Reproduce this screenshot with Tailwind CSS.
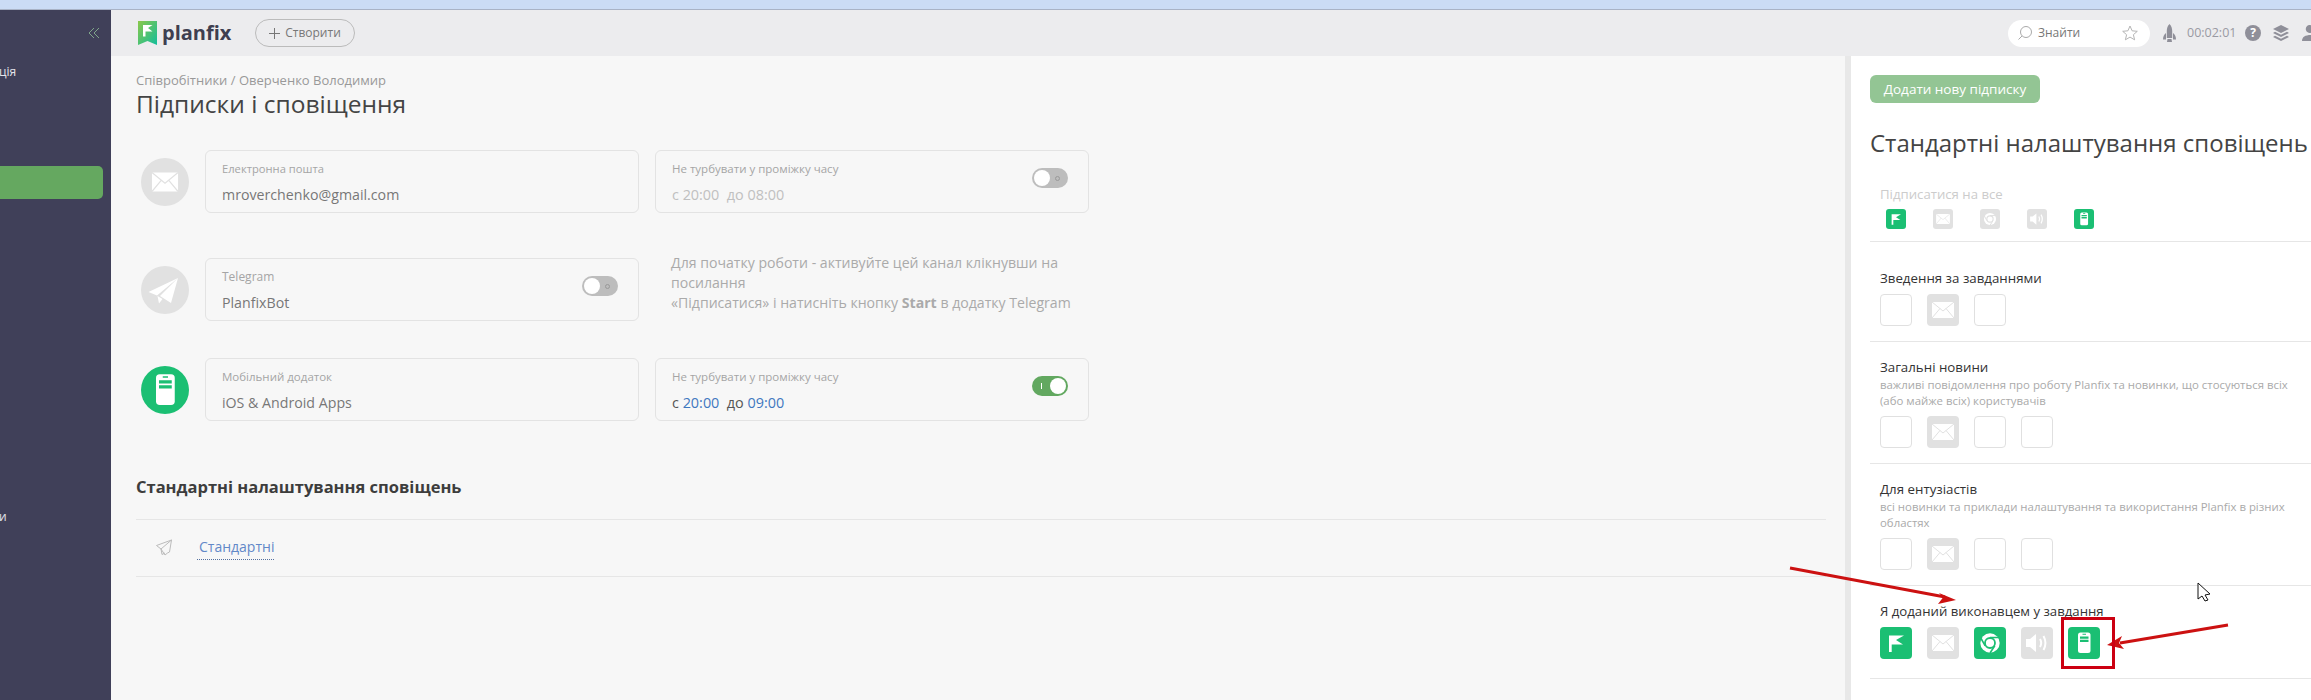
<!DOCTYPE html>
<html lang="uk">
<head>
  <meta charset="UTF-8" />
  <title>Підписки і сповіщення</title>
  <script src="https://cdn.jsdelivr.net/npm/@tailwindcss/browser@4"></script>
</head>
<body class="relative w-[2311px] h-[700px] overflow-hidden bg-[#f7f7f7] [font-family:'Open_Sans',sans-serif]">
  <svg class="hidden">
    <symbol id="mail" viewBox="0 0 32 32">
      <path d="M5 8h22v16H5z" fill="#fff" />
      <path d="M5 8l11 9 11-9M5 24l8-9.5M27 24l-8-9.5" fill="none" stroke="#e1e1e1" stroke-width="1" />
    </symbol>
    <symbol id="flag" viewBox="0 0 32 32">
      <path d="M9 8.5h15l-8 4.5 7 4.500H11.700V25H9z" fill="#fff" />
    </symbol>
    <symbol id="chrome" viewBox="0 0 32 32">
      <circle cx="16" cy="16" r="9.7" fill="#fff" />
      <circle cx="16" cy="16" r="5" fill="none" stroke="currentColor" stroke-width="1.8" />
      <path d="M16 10.5h9M11.2 18.8L6.800 11M20.800 18.800L16 26" stroke="currentColor" stroke-width="1.6" />
    </symbol>
    <symbol id="sound" viewBox="0 0 32 32">
      <path d="M5 12h4l6-5v18l-6-5H5z" fill="#fff" />
      <path d="M19 12c1.500 2.500 1.500 5.500 0 8M22.500 9c2.500 4.500 2.500 9.500 0 14" fill="none" stroke="#fff" stroke-width="2" />
    </symbol>
    <symbol id="phone" viewBox="0 0 32 32">
      <rect x="10" y="5.5" width="12.5" height="20.5" rx="2.5" fill="#fff" />
      <path d="M14.500 6.800h3.500v1h-3.500zM12 9.500h8.500v2.200H12zM12 12.800h8.500v2.200H12z" fill="currentColor" />
    </symbol>
  </svg>

  <div class="h-[10px] bg-[#cbdcf5] border-b border-[#a9b3c6]"></div>

  <div class="flex h-[690px]">
    <aside class="w-[111px] shrink-0 bg-[#404059] flex flex-col">
      <div class="flex justify-end pr-[11px] pt-[18px]">
        <svg class="w-[12px] h-[10px]" viewBox="0 0 12 10" fill="none" stroke="#7fa58a" stroke-width="1">
          <path d="M6 0L1 5l5 5M11 0L6 5l5 5" />
        </svg>
      </div>
      <div class="mt-[24px] h-[20px] leading-[20px] text-[12px] text-[#e4e4ea] -ml-[1px]">ція</div>
      <div class="mt-[84px] w-[103px] h-[33px] bg-[#65a860] rounded-r-[5px]"></div>
      <div class="mt-[308px] h-[20px] leading-[20px] text-[12px] text-[#e4e4ea] -ml-[1px]">и</div>
    </aside>

    <div class="flex-1 min-w-0 flex flex-col">
      <header class="h-[46px] shrink-0 bg-[#ececee] flex items-center pl-[27px]">
        <svg class="w-[19px] h-[24px]" viewBox="0 0 19 24">
          <defs>
            <linearGradient id="logo-grad" x1="0" y1="0" x2="1" y2="1">
              <stop offset="0" stop-color="#8bc84a" />
              <stop offset="1" stop-color="#12bd9b" />
            </linearGradient>
          </defs>
          <path d="M0 0h19v24l-9.5-4L0 24z" fill="url(#logo-grad)" />
          <path d="M5 4h9.5l-4.500 3 4.500 3.500H7.500V15.500H5z" fill="#fff" />
        </svg>
        <span class="ml-[5px] w-[70px] text-[20px] leading-[24px] font-bold text-[#3f3f50]">planfix</span>
        <button class="ml-[23px] w-[100px] h-[28px] rounded-full border border-[#bbbbbb] flex items-center justify-center gap-[5px] text-[12px] text-[#777777]">
          <svg class="w-[11px] h-[11px]" viewBox="0 0 11 11" stroke="#777777" stroke-width="1"><path d="M5.500 0v11M0 5.500h11" /></svg>
          Створити
        </button>
        <div class="ml-auto flex items-center">
          <div class="w-[142px] h-[27px] bg-white rounded-full flex items-center pl-[10px] pr-[12px]">
            <svg class="w-[14px] h-[14px]" viewBox="0 0 14 14" fill="none" stroke="#aaaaaa" stroke-width="1"><circle cx="8" cy="6" r="5.500" /><path d="M4 10l-3.500 3.500" /></svg>
            <span class="ml-[6px] text-[12px] text-[#777777]">Знайти</span>
            <svg class="ml-auto w-[16px] h-[16px]" viewBox="0 0 16 16" fill="none" stroke="#b5b5b5" stroke-width="1"><path d="M8 1l2.100 4.800 5.200.5-3.900 3.400 1.200 5.100L8 12.100l-4.600 2.700 1.200-5.100L.7 6.300l5.200-.5z" /></svg>
          </div>
          <svg class="ml-[13px] w-[13px] h-[18px]" viewBox="0 0 13 18" fill="#8f8f99"><path d="M6.500 0C8.500 2 9.200 4.500 9.200 7v7H3.800V7c0-2.500.7-5 2.700-7zM3 9v6.500H0c0-3 1-5 3-6.500zM10 9c2 1.500 3 3.500 3 6.500h-3zM4.500 15h4l.5 3H4z" /></svg>
          <span class="ml-[11px] w-[48px] text-[12.5px] text-[#9a9aa3]">00:02:01</span>
          <span class="ml-[10px] w-[16px] h-[16px] rounded-full bg-[#8f8f99] text-white text-[12px] leading-[16px] font-bold text-center">?</span>
          <svg class="ml-[12px] w-[16px] h-[16px]" viewBox="0 0 16 16" fill="#8f8f99"><path d="M8 0l8 4-8 4-8-4z" /><path d="M2 6.800l6 3 6-3 2 1.200-8 4-8-4z" /><path d="M2 10.800l6 3 6-3 2 1.200-8 4-8-4z" /></svg>
          <svg class="ml-[13px] w-[9px] h-[16px]" viewBox="0 0 9 16" fill="#8f8f99"><path d="M8 0a4 4 0 0 1 1 .2v7.600A4 4 0 1 1 8 0zM0 16c0-4 3-6 9-6v6z" /></svg>
        </div>
      </header>

      <div class="flex-1 min-h-0 flex">
        <main class="w-[1734px] shrink-0 pl-[25px] pr-[19px]">
          <div class="pt-[15px] text-[13px] leading-[18px] text-[#999999]">Співробітники / Оверченко Володимир</div>
          <h1 class="h-[30px] text-[24.5px] leading-[30px] text-[#444444]">Підписки і сповіщення</h1>

          <div class="mt-[31px] flex items-center pl-[5px]">
            <div class="w-[48px] h-[48px] rounded-full bg-[#e1e1e1] flex items-center justify-center">
              <svg class="w-[38px] h-[38px]"><use href="#mail" /></svg>
            </div>
            <div class="ml-[16px] w-[434px] h-[63px] bg-[#f7f7f7] border border-[#e3e3e3] rounded-md pl-[16px] pt-[9px]">
              <div class="text-[11.2px] leading-[18px] text-[#a5a5a5]">Електронна пошта</div>
              <div class="mt-[7px] text-[14.2px] leading-[20px] text-[#777777]">mroverchenko@gmail.com</div>
            </div>
            <div class="ml-[16px] w-[434px] h-[63px] border border-[#e3e3e3] rounded-md pl-[16px] pr-[20px] pt-[9px] flex justify-between">
              <div>
                <div class="text-[11.5px] leading-[18px] text-[#a5a5a5]">Не турбувати у проміжку часу</div>
                <div class="mt-[7px] text-[14.4px] leading-[20px] text-[#c0c0c0] whitespace-pre">с 20:00  до 08:00</div>
              </div>
              <div class="mt-[8px] w-[36px] h-[20px] rounded-full bg-[#bdbdbd] flex items-center pl-[2px] pr-[8px] justify-between">
                <span class="w-[16px] h-[16px] rounded-full bg-white"></span>
                <span class="w-[5px] h-[5px] rounded-full border border-[#999999]"></span>
              </div>
            </div>
          </div>

          <div class="mt-[45px] flex items-center pl-[5px]">
            <div class="w-[48px] h-[48px] rounded-full bg-[#e1e1e1]">
              <svg class="w-[48px] h-[48px]" viewBox="0 0 48 48" fill="#fff">
                <path d="M37 12L7.500 26l8.500 3.500zM37 12L19 30l11 7zM16.500 30l1.500 7.500 3.500-4.500z" />
              </svg>
            </div>
            <div class="ml-[16px] w-[434px] h-[63px] border border-[#e3e3e3] rounded-md pl-[16px] pr-[20px] pt-[9px] flex justify-between">
              <div>
                <div class="text-[12px] leading-[18px] text-[#a5a5a5]">Telegram</div>
                <div class="mt-[7px] text-[14.2px] leading-[20px] text-[#777777]">PlanfixBot</div>
              </div>
              <div class="mt-[8px] w-[36px] h-[20px] rounded-full bg-[#bdbdbd] flex items-center pl-[2px] pr-[8px] justify-between">
                <span class="w-[16px] h-[16px] rounded-full bg-white"></span>
                <span class="w-[5px] h-[5px] rounded-full border border-[#999999]"></span>
              </div>
            </div>
            <p class="ml-[32px] self-start -mt-[5px] w-[404px] text-[14.1px] leading-[20px] text-[#aaaaaa]">Для початку роботи - активуйте цей канал клікнувши на посилання<br />«Підписатися» і натисніть кнопку <b>Start</b> в додатку Telegram</p>
          </div>

          <div class="mt-[37px] flex items-center pl-[5px]">
            <div class="w-[48px] h-[48px] rounded-full bg-[#1bbf73] text-[#1bbf73]">
              <svg class="w-[48px] h-[48px]"><use href="#phone" /></svg>
            </div>
            <div class="ml-[16px] w-[434px] h-[63px] border border-[#e3e3e3] rounded-md pl-[16px] pt-[9px]">
              <div class="text-[11.5px] leading-[18px] text-[#a5a5a5]">Мобільний додаток</div>
              <div class="mt-[7px] text-[14.2px] leading-[20px] text-[#777777]">iOS &amp; Android Apps</div>
            </div>
            <div class="ml-[16px] w-[434px] h-[63px] border border-[#e3e3e3] rounded-md pl-[16px] pr-[20px] pt-[9px] flex justify-between">
              <div>
                <div class="text-[11.5px] leading-[18px] text-[#a5a5a5]">Не турбувати у проміжку часу</div>
                <div class="mt-[7px] text-[14.4px] leading-[20px] text-[#555555] whitespace-pre">с <span class="text-[#3f78c0]">20:00</span>  до <span class="text-[#3f78c0]">09:00</span></div>
              </div>
              <div class="mt-[8px] w-[36px] h-[20px] rounded-full bg-[#62a860] flex items-center pl-[9px] pr-[2px] justify-between">
                <span class="w-[1px] h-[6px] bg-white"></span>
                <span class="w-[16px] h-[16px] rounded-full bg-white"></span>
              </div>
            </div>
          </div>

          <h2 class="mt-[54px] text-[16.5px] leading-[24px] font-bold text-[#3d3d3d]">Стандартні налаштування сповіщень</h2>
          <div class="mt-[20px] h-[58px] border-y border-[#e6e6e6] flex items-center pl-[20px]">
            <svg class="w-[16px] h-[17px] -mt-[2px]" viewBox="0 0 16 17" fill="none" stroke="#bbbbbb" stroke-width="1"><path d="M15.500 1L.5 6.500l4.500 3.500 4 6 2.500-2 2-1zM15.500 1L5 10l1 5.500 3-1.500" /></svg>
            <a class="ml-[25px] pl-[2px] h-[23px] text-[14px] leading-[20px] text-[#6288c8] border-b border-dotted border-[#54709f]">Стандартні</a>
          </div>
        </main>

        <div class="w-[6px] shrink-0 bg-[#e8e8e8]"></div>

        <section class="flex-1 min-w-0 bg-white pl-[19px]">
          <button class="mt-[19px] w-[170px] h-[28px] rounded-md bg-[#93c594] text-white text-[13.5px] leading-[28px] text-center">Додати нову підписку</button>
          <h2 class="mt-[24px] text-[24px] leading-[32px] text-[#444444] whitespace-nowrap">Стандартні налаштування сповіщень</h2>

          <div class="pl-[10px] mt-[25px] h-[20px] text-[13.2px] leading-[20px] text-[#cccccc]">Підписатися на все</div>
          <div class="mt-[5px] pl-[16px] flex gap-[27px] text-[#1bbf73]">
            <span class="w-[20px] h-[20px] rounded-[3px] bg-[#1bbf73]"><svg class="w-[20px] h-[20px]"><use href="#flag" /></svg></span>
            <span class="w-[20px] h-[20px] rounded-[3px] bg-[#e1e1e1]"><svg class="w-[20px] h-[20px]"><use href="#mail" /></svg></span>
            <span class="w-[20px] h-[20px] rounded-[3px] bg-[#e1e1e1] text-[#e1e1e1]"><svg class="w-[20px] h-[20px]"><use href="#chrome" /></svg></span>
            <span class="w-[20px] h-[20px] rounded-[3px] bg-[#e1e1e1]"><svg class="w-[20px] h-[20px]"><use href="#sound" /></svg></span>
            <span class="w-[20px] h-[20px] rounded-[3px] bg-[#1bbf73]"><svg class="w-[20px] h-[20px]"><use href="#phone" /></svg></span>
          </div>

          <div class="mt-[12px] border-t border-[#e6e6e6] pl-[10px] pt-[26px] pb-[15px]">
            <div class="text-[13.3px] leading-[20px] text-[#333333]">Зведення за завданнями</div>
            <div class="mt-[6px] flex gap-[15px]">
              <span class="w-[32px] h-[32px] rounded-[4px] border border-[#e0e0e0]"></span>
              <span class="w-[32px] h-[32px] rounded-[4px] bg-[#e1e1e1]"><svg class="w-[32px] h-[32px]"><use href="#mail" /></svg></span>
              <span class="w-[32px] h-[32px] rounded-[4px] border border-[#e0e0e0]"></span>
            </div>
          </div>

          <div class="border-t border-[#e6e6e6] pl-[10px] pt-[16px] pb-[15px]">
            <div class="text-[13.3px] leading-[19px] text-[#333333]">Загальні новини</div>
            <p class="w-[420px] text-[11.4px] leading-[16px] text-[#aaaaaa]">важливі повідомлення про роботу Planfix та новинки, що стосуються всіх (або майже всіх) користувачів</p>
            <div class="mt-[7px] flex gap-[15px]">
              <span class="w-[32px] h-[32px] rounded-[4px] border border-[#e0e0e0]"></span>
              <span class="w-[32px] h-[32px] rounded-[4px] bg-[#e1e1e1]"><svg class="w-[32px] h-[32px]"><use href="#mail" /></svg></span>
              <span class="w-[32px] h-[32px] rounded-[4px] border border-[#e0e0e0]"></span>
              <span class="w-[32px] h-[32px] rounded-[4px] border border-[#e0e0e0]"></span>
            </div>
          </div>

          <div class="border-t border-[#e6e6e6] pl-[10px] pt-[16px] pb-[15px]">
            <div class="text-[13.3px] leading-[19px] text-[#333333]">Для ентузіастів</div>
            <p class="w-[420px] text-[11.4px] leading-[16px] text-[#aaaaaa]">всі новинки та приклади налаштування та використання Planfix в різних областях</p>
            <div class="mt-[7px] flex gap-[15px]">
              <span class="w-[32px] h-[32px] rounded-[4px] border border-[#e0e0e0]"></span>
              <span class="w-[32px] h-[32px] rounded-[4px] bg-[#e1e1e1]"><svg class="w-[32px] h-[32px]"><use href="#mail" /></svg></span>
              <span class="w-[32px] h-[32px] rounded-[4px] border border-[#e0e0e0]"></span>
              <span class="w-[32px] h-[32px] rounded-[4px] border border-[#e0e0e0]"></span>
            </div>
          </div>

          <div class="border-t border-[#e6e6e6] pl-[10px] pt-[16px] pb-[19px]">
            <div class="text-[13.2px] leading-[19px] text-[#333333]">Я доданий виконавцем у завдання</div>
            <div class="mt-[6px] flex gap-[15px] text-[#1bbf73]">
              <span class="w-[32px] h-[32px] rounded-[4px] bg-[#1bbf73]"><svg class="w-[32px] h-[32px]"><use href="#flag" /></svg></span>
              <span class="w-[32px] h-[32px] rounded-[4px] bg-[#e1e1e1]"><svg class="w-[32px] h-[32px]"><use href="#mail" /></svg></span>
              <span class="w-[32px] h-[32px] rounded-[4px] bg-[#1bbf73]"><svg class="w-[32px] h-[32px]"><use href="#chrome" /></svg></span>
              <span class="w-[32px] h-[32px] rounded-[4px] bg-[#e1e1e1]"><svg class="w-[32px] h-[32px]"><use href="#sound" /></svg></span>
              <span class="w-[32px] h-[32px] rounded-[4px] bg-[#1bbf73]"><svg class="w-[32px] h-[32px]"><use href="#phone" /></svg></span>
            </div>
          </div>

          <div class="border-t border-[#e6e6e6] pl-[10px] pt-[16px]">
            <div class="text-[13.3px] leading-[19px] text-[#333333]">Завдання перепризначено мені</div>
          </div>
        </section>
      </div>
    </div>
  </div>

  <!-- annotation arrows, red frame and mouse pointer drawn over the screenshot -->
  <svg class="absolute left-0 top-0 w-[2311px] h-[700px] pointer-events-none" viewBox="0 0 2311 700">
    <path d="M1790 568L1945 597" stroke="#cc1111" stroke-width="3" />
    <path d="M1956 600L1939 593L1943 597.5L1938 604z" fill="#cc1111" />
    <path d="M2228 625L2120 643" stroke="#cc1111" stroke-width="3" />
    <path d="M2107 645L2122 636L2119 643L2124 649z" fill="#cc1111" />
    <rect x="2062.5" y="618.5" width="51" height="49" fill="none" stroke="#cc0011" stroke-width="3" />
    <path d="M2198 583V599L2202 596L2205 601L2208 600L2205 595L2210 594z" fill="#fff" stroke="#111" stroke-width="1" />
  </svg>
</body>
</html>
